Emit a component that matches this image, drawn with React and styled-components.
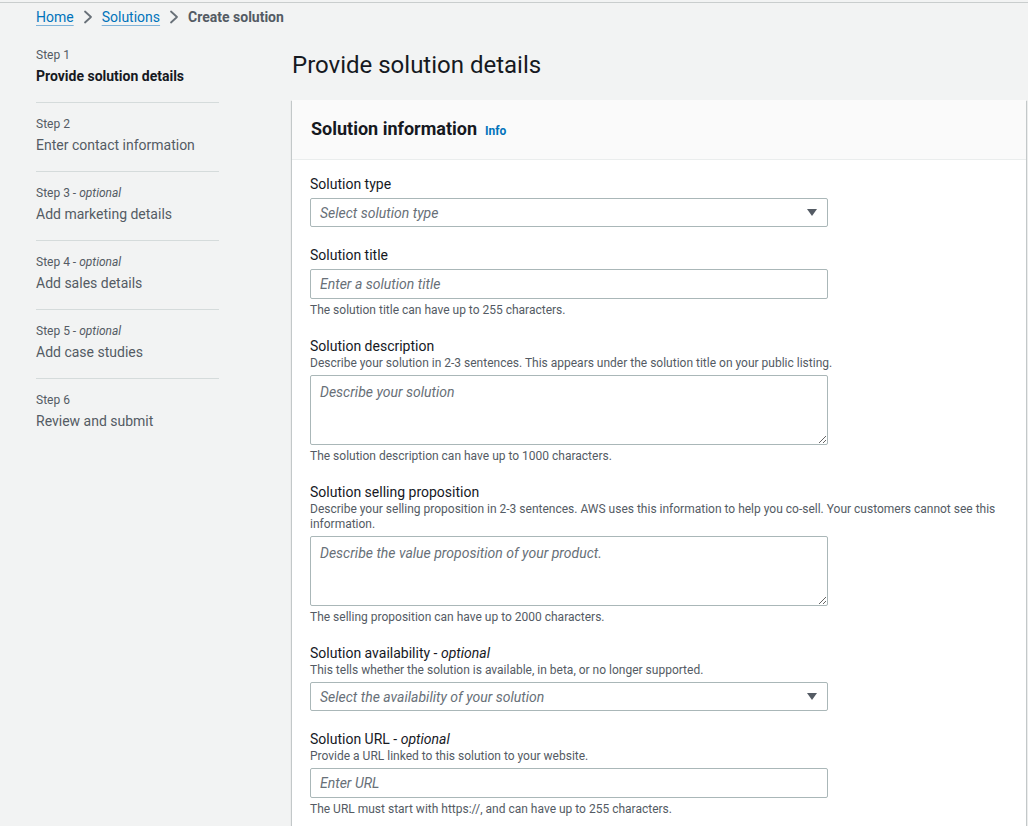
import styled, { createGlobalStyle } from 'styled-components';

const GlobalStyle = createGlobalStyle`
  html, body {
    margin: 0;
    background: #f2f3f3;
    font-family: Roboto, 'Liberation Sans', sans-serif;
    color: #16191f;
  }
  * {
    box-sizing: border-box;
  }
`;

const steps = [
  { label: 'Step 1', name: 'Provide solution details', active: true },
  { label: 'Step 2', name: 'Enter contact information' },
  { label: 'Step 3', name: 'Add marketing details', optional: true },
  { label: 'Step 4', name: 'Add sales details', optional: true },
  { label: 'Step 5', name: 'Add case studies', optional: true },
  { label: 'Step 6', name: 'Review and submit' },
];

const Chevron = () => (
  <svg width="10" height="14" viewBox="0 0 10 14" fill="none">
    <polyline
      points="2,1.5 8,7 2,12.5"
      stroke="#687078"
      strokeWidth="1.8"
      strokeLinejoin="round"
      strokeLinecap="round"
    />
  </svg>
);

const Caret = () => (
  <svg width="10" height="7" viewBox="0 0 10 7">
    <polygon points="0,0 10,0 5,7" fill="#545b64" />
  </svg>
);

const App = () => {
  return (
    <Page>
      <GlobalStyle />
      <Breadcrumbs>
        <Crumb href="#">Home</Crumb>
        <Chevron />
        <Crumb href="#">Solutions</Crumb>
        <Chevron />
        <Current>Create solution</Current>
      </Breadcrumbs>
      <Layout>
        <Sidebar>
          {steps.map((s) => (
            <StepItem key={s.label}>
              <StepLabel>
                {s.label}
                {s.optional && (
                  <>
                    {' - '}
                    <em>optional</em>
                  </>
                )}
              </StepLabel>
              <StepName $active={s.active}>{s.name}</StepName>
            </StepItem>
          ))}
        </Sidebar>
        <Main>
          <PageTitle>Provide solution details</PageTitle>
          <Panel>
            <PanelHeader>
              <PanelTitle>Solution information</PanelTitle>
              <InfoLink href="#">Info</InfoLink>
            </PanelHeader>
            <PanelBody>
              <Field>
                <Label>Solution type</Label>
                <SelectBox>
                  <Placeholder>Select solution type</Placeholder>
                  <Caret />
                </SelectBox>
              </Field>

              <Field>
                <Label>Solution title</Label>
                <Input placeholder="Enter a solution title" />
                <Hint>The solution title can have up to 255 characters.</Hint>
              </Field>

              <Field>
                <Label>Solution description</Label>
                <Description>
                  Describe your solution in 2-3 sentences. This appears under
                  the solution title on your public listing.
                </Description>
                <TextArea placeholder="Describe your solution" />
                <Hint>
                  The solution description can have up to 1000 characters.
                </Hint>
              </Field>

              <Field>
                <Label>Solution selling proposition</Label>
                <Description>
                  Describe your selling proposition in 2-3 sentences. AWS uses
                  this information to help you co-sell. Your customers cannot
                  see this information.
                </Description>
                <TextArea placeholder="Describe the value proposition of your product." />
                <Hint>
                  The selling proposition can have up to 2000 characters.
                </Hint>
              </Field>

              <Field>
                <Label>
                  Solution availability - <em>optional</em>
                </Label>
                <Description>
                  This tells whether the solution is available, in beta, or no
                  longer supported.
                </Description>
                <SelectBox>
                  <Placeholder>Select the availability of your solution</Placeholder>
                  <Caret />
                </SelectBox>
              </Field>

              <Field>
                <Label>
                  Solution URL - <em>optional</em>
                </Label>
                <Description>
                  Provide a URL linked to this solution to your website.
                </Description>
                <Input placeholder="Enter URL" />
                <Hint>
                  The URL must start with https://, and can have up to 255
                  characters.
                </Hint>
              </Field>
            </PanelBody>
          </Panel>
        </Main>
      </Layout>
    </Page>
  );
};

const Page = styled.div`
  margin-top: 2px;
  border-top: 1px solid #c9cdcd;
  min-height: 824px;
  padding: 0 2px 0 36px;
`;

const Breadcrumbs = styled.nav`
  display: flex;
  align-items: center;
  gap: 5px;
  height: 26px;
  margin-top: 1px;
  font-size: 14px;
  line-height: 20px;
  svg {
    margin: 0 4px;
  }
`;

const Crumb = styled.a`
  color: #0073bb;
  text-decoration: underline;
  text-decoration-color: #7fb3d9;
  text-underline-offset: 3px;
`;

const Current = styled.span`
  color: #545b64;
  font-weight: 700;
`;

const Layout = styled.div`
  display: flex;
  gap: 73px;
  margin-top: 17px;
`;

const Sidebar = styled.ol`
  list-style: none;
  margin: 0;
  padding: 0;
  width: 183px;
  flex-shrink: 0;
`;

const StepItem = styled.li`
  padding: 0 0 15px;
  margin-bottom: 13px;
  border-bottom: 1px solid #d5dbdb;
  &:last-child {
    border-bottom: none;
  }
`;

const StepLabel = styled.div`
  font-size: 12px;
  line-height: 16px;
  color: #545b64;
  margin-bottom: 2px;
  em {
    font-style: italic;
  }
`;

const StepName = styled.div`
  font-size: 14px;
  line-height: 22px;
  color: ${(p) => (p.$active ? '#16191f' : '#545b64')};
  font-weight: ${(p) => (p.$active ? 700 : 400)};
`;

const Main = styled.main`
  flex: 1;
  min-width: 0;
`;

const PageTitle = styled.h1`
  margin: 3px 0 20px;
  font-size: 24px;
  line-height: 30px;
  font-weight: 400;
  color: #16191f;
`;

const Panel = styled.section`
  background: #fff;
  box-shadow: 0 1px 1px 0 rgba(0, 28, 36, 0.3),
    1px 1px 1px 0 rgba(0, 28, 36, 0.15), -1px 1px 1px 0 rgba(0, 28, 36, 0.15);
`;

const PanelHeader = styled.header`
  display: flex;
  align-items: baseline;
  gap: 8px;
  padding: 18px 19px 19px;
  background: #fafafa;
  border-bottom: 1px solid #eaeded;
`;

const PanelTitle = styled.h2`
  margin: 0;
  font-size: 18px;
  line-height: 22px;
  font-weight: 700;
`;

const InfoLink = styled.a`
  color: #0073bb;
  font-size: 12px;
  font-weight: 700;
  text-decoration: none;
`;

const PanelBody = styled.div`
  display: flex;
  flex-direction: column;
  gap: 18px;
  padding: 14px 19px 20px 18px;
`;

const Field = styled.div`
  display: flex;
  flex-direction: column;
`;

const Label = styled.label`
  font-size: 14px;
  line-height: 20px;
  color: #16191f;
  em {
    font-style: italic;
  }
`;

const Description = styled.div`
  font-size: 12px;
  line-height: 15px;
  color: #545b64;
`;

const controlBase = `
  width: 518px;
  margin-top: 4px;
  border: 1px solid #aab7b8;
  border-radius: 2px;
  background: #fff;
  font-family: Roboto, 'Liberation Sans', sans-serif;
  font-size: 14px;
  color: #16191f;
  padding: 0 9px;
  &::placeholder {
    color: #687078;
    font-style: italic;
  }
`;

const Input = styled.input`
  ${controlBase}
  height: 30px;
  outline: none;
`;

const TextArea = styled.textarea`
  ${controlBase}
  height: 70px;
  padding: 6px 9px;
  resize: vertical;
  outline: none;
  line-height: 20px;
`;

const SelectBox = styled.div`
  ${controlBase}
  height: 29px;
  display: flex;
  align-items: center;
  justify-content: space-between;
  padding: 0 10px 0 9px;
`;

const Placeholder = styled.span`
  color: #687078;
  font-style: italic;
`;

const Hint = styled.div`
  margin-top: 3px;
  font-size: 12px;
  line-height: 16px;
  color: #545b64;
`;

export default App;
